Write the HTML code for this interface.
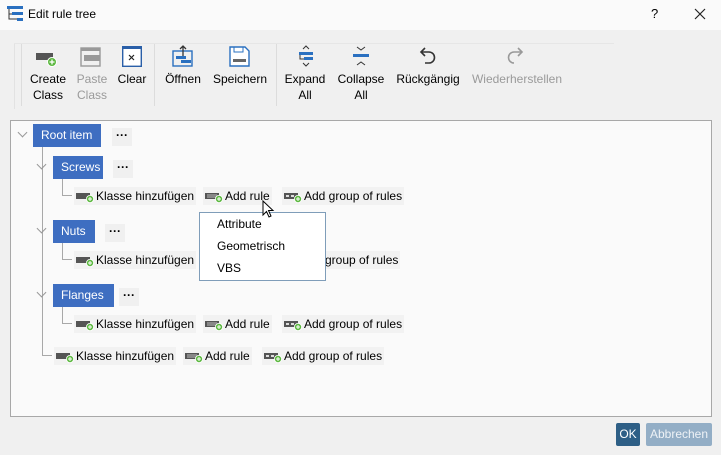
<!DOCTYPE html>
<html><head><meta charset="utf-8"><style>
*{margin:0;padding:0;box-sizing:border-box}
body{width:721px;height:455px;background:#f0f0f0;font-family:"Liberation Sans",sans-serif;font-size:12px;color:#000;position:relative;overflow:hidden}
.a{position:absolute;white-space:nowrap}
.tb{text-align:center;line-height:16px;font-size:12px}
.dis{color:#9a9a9a}
.sep{position:absolute;width:1px;background:#dcdcdc;top:44px;height:62px}
.node{position:absolute;background:#3e6ec1;color:#fff;height:23px;line-height:23px;padding:0 8px;font-size:12px}
.dots{position:absolute;font-weight:bold;font-size:12px;background:#f0f0f0;padding:0 4px;height:18px;line-height:14px}
.ln{position:absolute;background:#a8a8a8}
.chev{position:absolute;width:7px;height:7px;border-right:1.5px solid #999;border-bottom:1.5px solid #999;transform:rotate(45deg)}
.act{position:absolute;height:18px;line-height:18px;background:#f2f2f2;padding-left:22px;padding-right:2px}
.act svg{position:absolute;left:2px;top:4px}
</style></head><body>
<div class="a" style="left:0;top:0;width:721px;height:30px;background:#fafafa"></div>
<svg class="a" style="left:7px;top:6px" width="16" height="16"><rect x="0" y="0" width="16" height="3" fill="#2a70c0"/><rect x="5" y="6" width="11" height="3" fill="#2a70c0"/><rect x="10" y="12" width="6" height="3" fill="#2a70c0"/><path d="M2 3V13H10M2 8H5" stroke="#333" fill="none"/></svg>
<div class="a" style="left:28px;top:7px;font-size:12px">Edit rule tree</div>
<div class="a" style="left:651px;top:6px;font-size:13px">?</div>
<svg class="a" style="left:694px;top:8px" width="12" height="12"><path d="M1 1L11 11M11 1L1 11" stroke="#222" stroke-width="1.2"/></svg>

<div class="a" style="left:14px;top:43px;width:1px;height:66px;background:#e2e2e2"></div>
<div class="a" style="left:14px;top:43px;width:600px;height:1px;background:#e6e6e6"></div>
<div class="sep" style="left:21px"></div>
<div class="sep" style="left:154px"></div>
<div class="sep" style="left:276px"></div>

<svg class="a" style="left:36px;top:50px" width="22" height="18"><rect x="0" y="3" width="17" height="7" fill="#555"/><circle cx="16" cy="12" r="4.5" fill="#5cb840" stroke="#fff"/><path d="M16 9.5v5M13.5 12h5" stroke="#fff" stroke-width="1.3"/></svg>
<div class="a tb" style="left:26px;top:71px;width:44px">Create<br>Class</div>
<svg class="a" style="left:80px;top:47px" width="22" height="20"><rect x="1" y="1" width="19" height="18" fill="none" stroke="#999" stroke-width="1.4"/><rect x="1" y="1" width="19" height="3" fill="#999"/><rect x="4" y="8" width="16" height="6" fill="#999"/></svg>
<div class="a tb dis" style="left:70px;top:71px;width:44px">Paste<br>Class</div>
<svg class="a" style="left:122px;top:46px" width="20" height="21"><rect x="0.7" y="0.7" width="18.6" height="19.6" fill="#fff" stroke="#2a5fa8" stroke-width="1.4"/><rect x="0" y="0" width="20" height="3" fill="#2a5fa8"/><path d="M7 9L12 14M12 9L7 14" stroke="#222" stroke-width="1.2"/></svg>
<div class="a tb" style="left:114px;top:71px;width:36px">Clear</div>
<svg class="a" style="left:172px;top:45px" width="22" height="22"><rect x="1" y="6" width="19" height="15" fill="none" stroke="#2a70c0" stroke-width="1.4"/><path d="M11 1V11M8 4L11 1L14 4" stroke="#333" fill="none" stroke-width="1.3"/><rect x="4" y="11" width="10" height="3" fill="#2a70c0"/><rect x="9" y="15" width="10" height="3" fill="#2a70c0"/></svg>
<div class="a tb" style="left:160px;top:71px;width:46px">Öffnen</div>
<svg class="a" style="left:229px;top:46px" width="21" height="21"><path d="M1 1H16L20 5V20H1Z" fill="#fff" stroke="#2a70c0" stroke-width="1.4"/><rect x="5" y="1" width="9" height="5" fill="none" stroke="#2a70c0"/><rect x="4" y="13" width="13" height="3" fill="#666"/></svg>
<div class="a tb" style="left:212px;top:71px;width:56px">Speichern</div>
<svg class="a" style="left:297px;top:45px" width="18" height="22"><path d="M6 4L9 1L12 4M6 18L9 21L12 18" stroke="#333" fill="none"/><rect x="2" y="7" width="14" height="3" fill="#2a70c0"/><rect x="7" y="12" width="9" height="3" fill="#2a70c0"/><path d="M3 10V14H7" stroke="#333" fill="none"/></svg>
<div class="a tb" style="left:282px;top:71px;width:46px">Expand<br>All</div>
<svg class="a" style="left:352px;top:45px" width="18" height="22"><path d="M5 2L9 5L13 2M5 20L9 17L13 20" stroke="#333" fill="none"/><rect x="1" y="9" width="16" height="3" fill="#2a70c0"/></svg>
<div class="a tb" style="left:336px;top:71px;width:50px">Collapse<br>All</div>
<svg class="a" style="left:417px;top:46px" width="20" height="20"><path d="M5 6H12A5.5 5.5 0 0 1 12 17H8" stroke="#333" stroke-width="1.6" fill="none"/><path d="M8 2L4 6L8 10" stroke="#333" stroke-width="1.6" fill="none"/></svg>
<div class="a tb" style="left:396px;top:71px;width:64px">Rückgängig</div>
<svg class="a" style="left:506px;top:46px" width="20" height="20"><path d="M15 6H8A5.5 5.5 0 0 0 8 17" stroke="#999" stroke-width="1.6" fill="none"/><path d="M12 2L16 6L12 10" stroke="#999" stroke-width="1.6" fill="none"/></svg>
<div class="a tb dis" style="left:470px;top:71px;width:94px">Wiederherstellen</div>

<div class="a" style="left:10px;top:120px;width:702px;height:297px;background:#fafafa;border:1px solid #a8a8a8"></div>

<div class="chev" style="left:19px;top:129px"></div>
<div class="node" style="left:33px;top:124px;width:68px">Root item</div>
<div class="dots" style="left:112px;top:128px">···</div>
<div class="ln" style="left:42px;top:147px;width:1px;height:209px"></div>
<div class="ln" style="left:42px;top:355px;width:10px;height:1px"></div>

<div class="chev" style="left:38px;top:161px"></div>
<div class="node" style="left:53px;top:156px;width:50px">Screws</div>
<div class="dots" style="left:113px;top:160px">···</div>
<div class="ln" style="left:62px;top:179px;width:1px;height:17px"></div>
<div class="ln" style="left:62px;top:195px;width:10px;height:1px"></div>

<div class="chev" style="left:38px;top:225px"></div>
<div class="node" style="left:53px;top:220px;width:42px">Nuts</div>
<div class="dots" style="left:105px;top:224px">···</div>
<div class="ln" style="left:62px;top:243px;width:1px;height:17px"></div>
<div class="ln" style="left:62px;top:259px;width:10px;height:1px"></div>

<div class="chev" style="left:38px;top:289px"></div>
<div class="node" style="left:53px;top:284px;width:61px">Flanges</div>
<div class="dots" style="left:119px;top:288px">···</div>
<div class="ln" style="left:62px;top:307px;width:1px;height:17px"></div>
<div class="ln" style="left:62px;top:323px;width:10px;height:1px"></div>

<div class="act" style="left:74px;top:187px">Klasse hinzufügen<svg width="20" height="12"><rect x="0" y="2" width="14" height="6" fill="#555"/><circle cx="14" cy="8" r="3.6" fill="#5cb840" stroke="#fff" stroke-width=".8"/><path d="M14 6v4M12 8h4" stroke="#fff"/></svg></div>
<div class="act" style="left:203px;top:187px">Add rule<svg width="20" height="12"><rect x="0" y="2" width="14" height="6" fill="#555"/><path d="M2 4H12M2 6H12" stroke="#ddd" stroke-width=".8"/><circle cx="14" cy="8" r="3.6" fill="#5cb840" stroke="#fff" stroke-width=".8"/><path d="M14 6v4M12 8h4" stroke="#fff"/></svg></div>
<div class="act" style="left:282px;top:187px">Add group of rules<svg width="20" height="12"><rect x="0" y="2" width="14" height="6" fill="#555"/><rect x="2" y="4" width="3" height="2" fill="#ddd"/><rect x="7" y="4" width="3" height="2" fill="#ddd"/><circle cx="14" cy="8" r="3.6" fill="#5cb840" stroke="#fff" stroke-width=".8"/><path d="M14 6v4M12 8h4" stroke="#fff"/></svg></div>

<div class="act" style="left:74px;top:251px">Klasse hinzufügen<svg width="20" height="12"><rect x="0" y="2" width="14" height="6" fill="#555"/><circle cx="14" cy="8" r="3.6" fill="#5cb840" stroke="#fff" stroke-width=".8"/><path d="M14 6v4M12 8h4" stroke="#fff"/></svg></div>
<div class="act" style="left:305px;top:251px;padding-left:20px">group of rules</div>

<div class="act" style="left:74px;top:315px">Klasse hinzufügen<svg width="20" height="12"><rect x="0" y="2" width="14" height="6" fill="#555"/><circle cx="14" cy="8" r="3.6" fill="#5cb840" stroke="#fff" stroke-width=".8"/><path d="M14 6v4M12 8h4" stroke="#fff"/></svg></div>
<div class="act" style="left:203px;top:315px">Add rule<svg width="20" height="12"><rect x="0" y="2" width="14" height="6" fill="#555"/><path d="M2 4H12M2 6H12" stroke="#ddd" stroke-width=".8"/><circle cx="14" cy="8" r="3.6" fill="#5cb840" stroke="#fff" stroke-width=".8"/><path d="M14 6v4M12 8h4" stroke="#fff"/></svg></div>
<div class="act" style="left:282px;top:315px">Add group of rules<svg width="20" height="12"><rect x="0" y="2" width="14" height="6" fill="#555"/><rect x="2" y="4" width="3" height="2" fill="#ddd"/><rect x="7" y="4" width="3" height="2" fill="#ddd"/><circle cx="14" cy="8" r="3.6" fill="#5cb840" stroke="#fff" stroke-width=".8"/><path d="M14 6v4M12 8h4" stroke="#fff"/></svg></div>

<div class="act" style="left:54px;top:347px">Klasse hinzufügen<svg width="20" height="12"><rect x="0" y="2" width="14" height="6" fill="#555"/><circle cx="14" cy="8" r="3.6" fill="#5cb840" stroke="#fff" stroke-width=".8"/><path d="M14 6v4M12 8h4" stroke="#fff"/></svg></div>
<div class="act" style="left:183px;top:347px">Add rule<svg width="20" height="12"><rect x="0" y="2" width="14" height="6" fill="#555"/><path d="M2 4H12M2 6H12" stroke="#ddd" stroke-width=".8"/><circle cx="14" cy="8" r="3.6" fill="#5cb840" stroke="#fff" stroke-width=".8"/><path d="M14 6v4M12 8h4" stroke="#fff"/></svg></div>
<div class="act" style="left:262px;top:347px">Add group of rules<svg width="20" height="12"><rect x="0" y="2" width="14" height="6" fill="#555"/><rect x="2" y="4" width="3" height="2" fill="#ddd"/><rect x="7" y="4" width="3" height="2" fill="#ddd"/><circle cx="14" cy="8" r="3.6" fill="#5cb840" stroke="#fff" stroke-width=".8"/><path d="M14 6v4M12 8h4" stroke="#fff"/></svg></div>

<div class="a" style="left:199px;top:212px;width:127px;height:69px;background:#fff;border:1px solid #7f9db9"></div>
<div class="a" style="left:217px;top:217px">Attribute</div>
<div class="a" style="left:217px;top:239px">Geometrisch</div>
<div class="a" style="left:217px;top:261px">VBS</div>

<svg class="a" style="left:262px;top:200px" width="14" height="20"><path d="M1 1V15L4.5 11.5L7 17L9 16L6.5 10.5H11Z" fill="#fff" stroke="#000" stroke-width="1"/></svg>

<div class="a" style="left:616px;top:423px;width:24px;height:23px;background:#2e5f86;color:#fff;text-align:center;line-height:23px;border-radius:2px">OK</div>
<div class="a" style="left:646px;top:423px;width:66px;height:23px;background:#93aec6;color:#eef2f6;text-align:center;line-height:23px;border-radius:2px">Abbrechen</div>
</body></html>
